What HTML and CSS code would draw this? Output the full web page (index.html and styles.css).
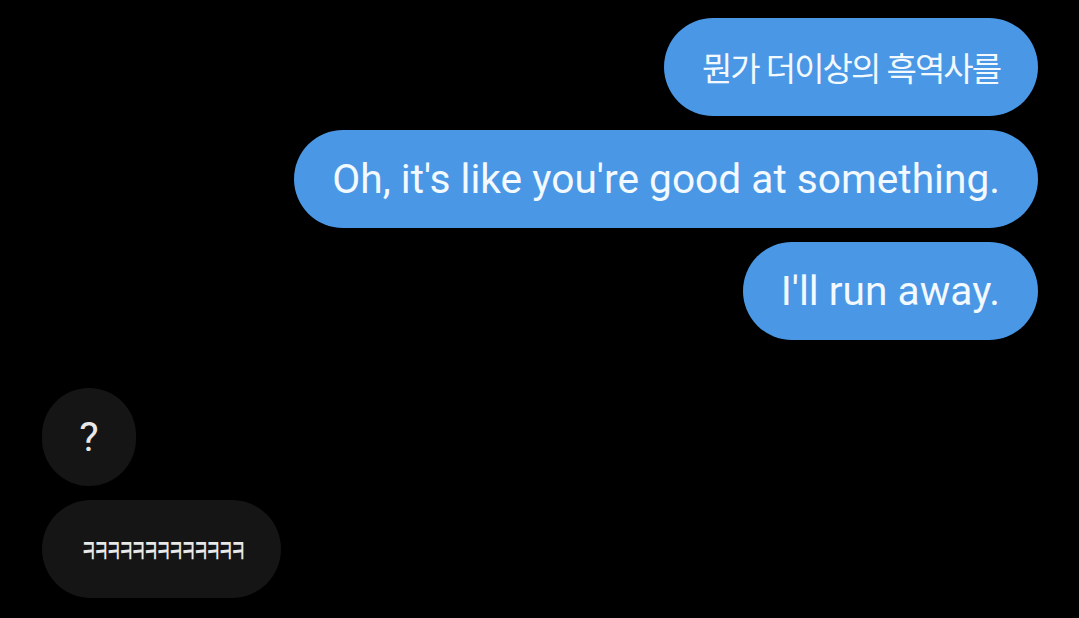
FILE: index.html
```html
<!DOCTYPE html>
<html lang="ko">
<head>
<meta charset="utf-8">
<title>Chat</title>
<link rel="stylesheet" href="styles.css">
</head>
<body>
<div class="chat">
  <div class="group sent">
    <div class="bubble blue ko">뭔가 더이상의 흑역사를</div>
    <div class="bubble blue en">Oh, it's like you're good at something.</div>
    <div class="bubble blue en">I'll run away.</div>
  </div>
  <div class="group received">
    <div class="bubble gray round">?</div>
    <div class="bubble gray laugh"><span class="squeeze">ㅋㅋㅋㅋㅋㅋㅋㅋㅋㅋㅋㅋㅋ</span></div>
  </div>
</div>
</body>
</html>
```
FILE: styles.css
```css
html, body {
  margin: 0;
  padding: 0;
  background: #000;
}
body {
  width: 1079px;
  height: 618px;
  overflow: hidden;
  font-family: Roboto, "Noto Sans CJK KR", sans-serif;
}
.chat {
  display: flex;
  flex-direction: column;
  padding: 18px 41px 0 42px;
  gap: 48px;
}
.group {
  display: flex;
  flex-direction: column;
  gap: 14px;
}
.sent { align-items: flex-end; }
.received { align-items: flex-start; }
.bubble {
  height: 98px;
  box-sizing: border-box;
  border-radius: 49px;
  display: flex;
  align-items: center;
  padding: 0 38px;
  white-space: nowrap;
}
.blue {
  background: #4a97e5;
  color: #f2f9ff;
}
.gray {
  background: #151515;
  color: #e8e8e8;
}
.en {
  font-family: Roboto, sans-serif;
  font-size: 40.7px;
}
.ko {
  font-family: "Noto Sans CJK KR", sans-serif;
  font-size: 33px;
  letter-spacing: -2px;
}
.round {
  width: 94px;
  padding: 0;
  justify-content: center;
  font-family: Roboto, sans-serif;
  font-size: 41px;
}
.laugh {
  width: 239px;
  padding: 0;
  justify-content: center;
  font-family: "Noto Sans CJK KR", sans-serif;
  font-size: 33px;
}
.squeeze {
  display: inline-block;
  transform: scaleX(0.52);
  letter-spacing: -6.4px;
  font-weight: 500;
}
```
